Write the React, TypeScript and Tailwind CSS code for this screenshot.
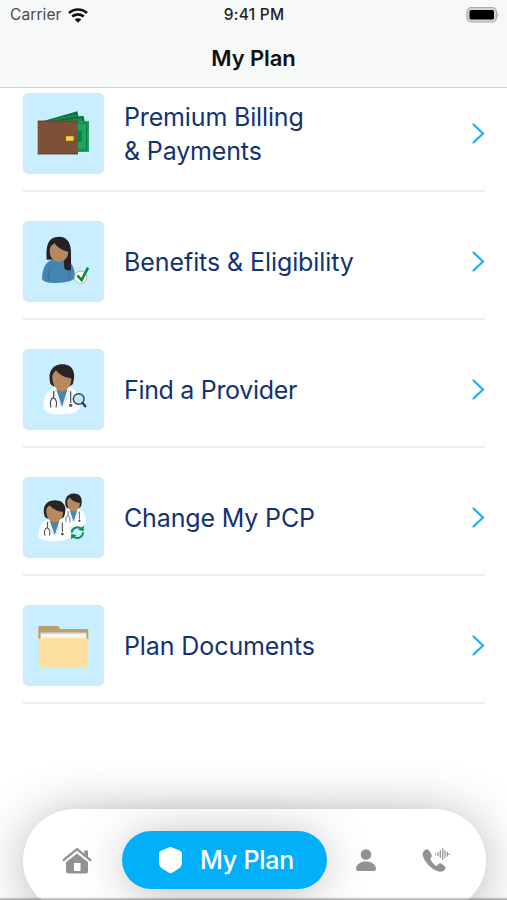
import type { ReactNode } from "react";

function Tile({ children }: { children: ReactNode }) {
  return (
    <svg viewBox="23 20 243 243" className="h-[81px] w-[81px] shrink-0 rounded-[5px] bg-[#c9eeff]">
      {children}
    </svg>
  );
}

function Wallet() {
  return (
    <Tile>
      <path d="M84 104 186 75l6 24v20z" fill="#0c7038" />
      <path d="M110 104 205 88l4 20-20 14z" fill="#159150" />
      <path d="M100 102 183 82l4 12-40 10z" fill="#15854a" />
      <path d="M150 104h71v93h-50z" fill="#21a35e" />
      <path d="M187 110h27v81h-27" fill="none" stroke="#0a7440" strokeWidth="3" />
      <path d="M187 134h12v32h-12z" fill="#0a8046" />
      <path d="M130 102 200 92l4 12" fill="none" stroke="#0a6835" strokeWidth="4" />
      <path d="M67 103h121v101H67z" fill="#7d5039" />
      <path d="M67 103h121v3H67zM67 200h121v4H67z" fill="#69402d" />
      <path d="M152 150h23v13h-23z" fill="#fbd633" />
    </Tile>
  );
}

function Member() {
  return (
    <Tile>
      <path d="M80 193c1-30 9-50 31-57h36c21 4 31 23 32 52 0 21-99 24-99 5z" fill="#4385ae" />
      <path d="M99 199c-1-14 0-24 4-34M161 199v-28" fill="none" stroke="#296b93" strokeWidth="2" />
      <path d="M94 136C91 93 98 68 130 67c32 0 38 26 37 57v42c-6 5-17 2-20-4l-2-27z" fill="#252126" />
      <path d="M103 110c0-12 7-18 15-23 10 15 25 22 41 25 0 19-13 30-28 30s-28-12-28-32z" fill="#b7895e" />
      <circle cx="196" cy="189" r="18.5" fill="#fffef5" stroke="#b2bd99" strokeWidth="3" />
      <path d="m186 183 13 14 19-37" fill="none" stroke="#078541" strokeWidth="7.5" />
    </Tile>
  );
}

function DoctorShape() {
  return (
    <>
      <path d="M84 193c2-35 13-54 37-60h37c24 7 36 23 37 56 3 18-26 28-58 27-32 0-53-7-53-23z" fill="#fdfefe" />
      <path d="m123 142 17 51 16-51z" fill="#4687ad" />
      <path d="m123 140-7 15 11 7-2 8 14 25M156 140l7 15-11 7 2 8-13 25" fill="none" stroke="#d5dade" strokeWidth="2.5" />
      <path d="M126 133h27v9c-6 8-21 8-27 0z" fill="#a87c54" />
      <path d="M106 126c-10-30 1-60 35-60 33 0 42 28 31 60l-9 6h-49z" fill="#292326" />
      <path d="M111 103c0-8 5-12 11-19 15 17 28 22 46 24 1 24-13 37-29 37s-28-16-28-42z" fill="#b7895e" />
      <path d="M115 145v20M107 195c-5-14 0-27 7-29 9 3 12 17 8 29M166 147v35" fill="none" stroke="#46494d" strokeWidth="3.5" />
      <circle cx="166" cy="189" r="5" fill="#505255" />
    </>
  );
}

function FindDoctor() {
  return (
    <Tile>
      <DoctorShape />
      <circle cx="190" cy="170" r="16" fill="#c3eafa" stroke="#3a454c" strokeWidth="4.5" />
      <path d="m202 182 8 10" stroke="#343b40" strokeWidth="7" strokeLinecap="round" />
    </Tile>
  );
}

function ChangeDoctor() {
  return (
    <Tile>
      <g transform="translate(81 25) scale(.67)"><DoctorShape /></g>
      <g transform="translate(-5 36) scale(.88 .82)"><DoctorShape /></g>
      <g fill="none" stroke="#159048" strokeWidth="6">
        <path d="M169 187a17 17 0 0 1 29-11M203 186a17 17 0 0 1-29 12" />
      </g>
      <path d="m206 166-1 17-17-5zM167 207l1-17 16 5z" fill="#159048" />
    </Tile>
  );
}

function Documents() {
  return (
    <Tile>
      <path d="M69 87q0-4 4-4h54q3 0 4 3l3 6h80q5 0 5 5v25H69z" fill="#b8a16d" />
      <path d="M76 103h137v22H76z" fill="#f5f5f8" />
      <path d="M76 103h137v4H76z" fill="#d9d6d8" />
      <path d="M70 122q3 0 4-3h139q2 3 6 3v87H70z" fill="#fde1a1" />
    </Tile>
  );
}

const rows = [
  { lines: ["Premium Billing", "& Payments"], icon: <Wallet />, text: "tracking-[-0.15px]" },
  { lines: ["Benefits & Eligibility"], icon: <Member />, text: "tracking-[-0.08px]" },
  { lines: ["Find a Provider"], icon: <FindDoctor />, text: "tracking-[-0.32px]" },
  { lines: ["Change My PCP"], icon: <ChangeDoctor />, text: "tracking-[-0.15px]" },
  { lines: ["Plan Documents"], icon: <Documents />, text: "tracking-[-0.1px]" },
];

function StatusBar() {
  return (
    <div className="grid h-[30px] grid-cols-3 items-center pl-[10px] pr-[7px]">
      <div className="flex items-center gap-[6px] text-[15.5px] tracking-[0.1px] text-[#49494a]">
        <span>Carrier</span>
        <svg viewBox="0 0 20 15" className="h-[15px] w-5" fill="none" stroke="#111" strokeWidth="2.7">
          <path d="M1 5.1c5.1-4.8 12.9-4.8 18 0M4.2 8.6c3.4-3.1 8.2-3.1 11.6 0" />
          <path d="m6.7 11.4 3.3 3.3 3.3-3.3c-1.9-1.7-4.7-1.7-6.6 0z" fill="#111" stroke="none" />
        </svg>
      </div>
      <div className="whitespace-nowrap pr-[2px] text-center text-[15.5px] font-medium tracking-[0.25px] text-[#222]">9:41 PM</div>
      <svg viewBox="0 0 34 18" className="h-[18px] w-[34px] justify-self-end">
        <rect x="1" y="1.500" width="29.500" height="14.500" rx="4.500" fill="#d3d4d4" stroke="#aaa" strokeWidth="1.2" />
        <rect x="3.500" y="4" width="24.500" height="9.500" rx="1.700" fill="#000" />
        <path d="M31.500 7q2 2 0 4z" fill="#aaa" />
      </svg>
    </div>
  );
}

function HomeIcon() {
  return (
    <svg viewBox="0 0 30 27" className="h-[27px] w-[30px]" fill="#929292">
      <path d="M1.700 13 15 2.200 28.300 13" fill="none" stroke="#929292" strokeWidth="2.300" strokeLinecap="round" strokeLinejoin="round" />
      <path d="M22.300 3.500h3.700v7l-3.700-3z" />
      <path fillRule="evenodd" d="M4 15 15 6.500 26 15v9q0 2.500-2.500 2.500h-17Q4 26.500 4 24zm8 1v8h6.500v-8z" />
    </svg>
  );
}

function PhoneIcon() {
  return (
    <svg viewBox="0 0 28 26" className="h-[26px] w-7" fill="#929292">
      <path d="M2 4q3-3 5-.5l2.500 4q1 2-1 3.500c-1 1 3 6.500 6 8l2-2q1.500-1.500 3.500 0l3 2.500q1.500 1.500-.5 3.500c-3 3-9 2-15-4S-1 7 2 4z" />
      <path d="M13.500 6.500v1M16 5.500v3M18.300 3.500v7M20.700 1.500v11M23 3.500v7M25.300 5v4M27.200 6.500v1" stroke="#929292" strokeWidth="1.2" strokeLinecap="round" />
    </svg>
  );
}

export default function App() {
  return (
    <div className="relative h-[900px] w-full overflow-hidden bg-white font-['Inter','Liberation_Sans',sans-serif]">
      <header className="h-[88px] border-b border-[#d2d4d3] bg-[#f7f8f8]">
        <StatusBar />
        <h1 className="pt-[10px] text-center text-[22px] font-semibold leading-[36px] tracking-[-0.1px] text-[#101112]">My Plan</h1>
      </header>
      <main className="ml-[22.5px] mr-[22px] pt-[5px]">
        {rows.map(({ lines, icon, text }) => (
          <div key={lines[0]} className="mb-[29px] flex h-[99px] items-start border-b-2 border-[#ececec]">
            <div className="flex h-[81px] w-full items-center">
              {icon}
              <div className={`ml-[20.5px] flex-1 text-[25px] leading-[34px] text-[#12336f] ${text}`}>
                {lines.map((line) => <div key={line}>{line}</div>)}
              </div>
              <svg viewBox="0 0 14 24" className="h-6 w-[14px]" fill="none" stroke="#25aaee" strokeWidth="2.2" strokeLinecap="round">
                <path d="m2.500 2.500 9.500 9-9.500 9" />
              </svg>
            </div>
          </div>
        ))}
      </main>
      <nav className="absolute left-[22.5px] top-[808.5px] h-[103px] w-[463px] rounded-[52px] bg-white shadow-[0_6px_60px_-10px_rgba(0,0,0,0.48)]">
        <div className="h-full rounded-[52px]">
          <div className="flex h-full items-center">
            <div className="ml-[39.5px]"><HomeIcon /></div>
            <div className="ml-[30px] flex h-[58px] w-[205px] items-center rounded-[29px] bg-[#02b0fa] pl-[36px] text-white shadow-[0_4px_50px_-6px_rgba(0,0,0,0.36)]">
              <svg viewBox="0 0 24 28" className="h-7 w-[25px]" fill="white">
                <path d="M12 1q1 0 3 1l6.500 2.700Q23.500 5.500 23.500 7.500V16q0 4-3 6.500L14 26.500q-2 1.500-4 0L3.500 22.500Q.5 20 .5 16V7.500q0-2 2-2.800L9 2q2-1 3-1z" />
              </svg>
              <span className="ml-[17px] whitespace-nowrap pt-px text-[25px] font-medium tracking-[-0.2px]">My Plan</span>
            </div>
            <svg viewBox="0 0 22 23" className="ml-[28px] h-[23px] w-[22px]" fill="#929292">
              <circle cx="11" cy="5.500" r="5.300" />
              <path d="M1 20c0-5 5-7.500 10-7.500S21 15 21 20q0 2-2.500 2h-15Q1 22 1 20z" />
            </svg>
            <div className="ml-[45px]"><PhoneIcon /></div>
          </div>
        </div>
      </nav>
      <div className="absolute bottom-0 left-0 h-[3px] w-full bg-linear-to-b from-transparent to-black/35" />
    </div>
  );
}
